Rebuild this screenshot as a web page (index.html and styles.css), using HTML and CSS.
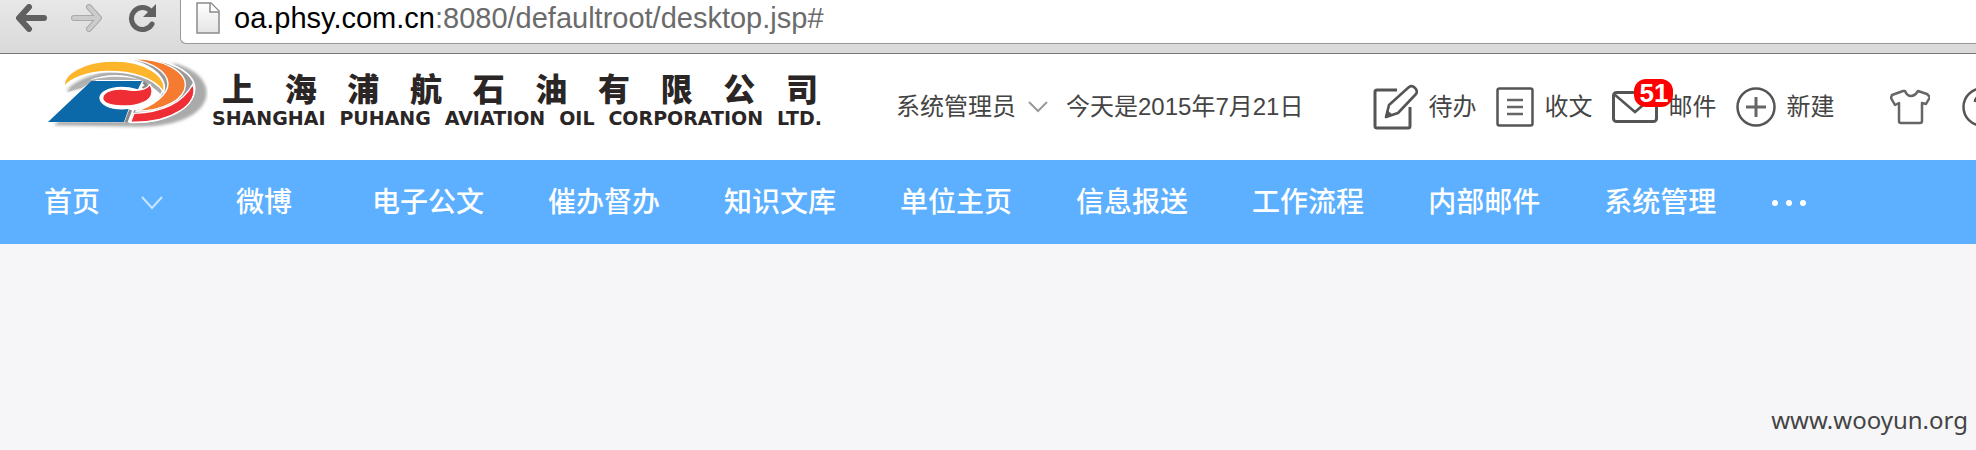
FILE: index.html
```html
<!DOCTYPE html>
<html lang="zh-CN">
<head>
<meta charset="utf-8">
<title>上海浦航石油有限公司</title>
<link rel="stylesheet" href="styles.css">
</head>
<body>
<div class="toolbar">
  <button class="tool" aria-label="后退"><svg width="32" height="28" viewBox="0 0 32 28"><path d="M14 3 4 14l10 11M5 14h24" fill="none" stroke="#606060" stroke-width="6" stroke-linecap="round" stroke-linejoin="round"/></svg></button>
  <button class="tool" aria-label="前进"><svg width="32" height="28" viewBox="0 0 32 28"><path d="M18 3l10 11-10 11M27 14H3" fill="none" stroke="#aaa" stroke-width="6" stroke-linecap="round" stroke-linejoin="round"/><path d="M18 3l10 11-10 11M27 14H3" fill="none" stroke="#ccc" stroke-width="4" stroke-linecap="round" stroke-linejoin="round"/></svg></button>
  <button class="tool" aria-label="刷新"><svg width="32" height="28" viewBox="0 0 32 28"><path d="M23 6.500A11 11 0 1 0 25 20" fill="none" stroke="#606060" stroke-width="5" stroke-linecap="round"/><path d="M29 0v13H16z" fill="#606060"/></svg></button>
  <div class="address">
    <svg width="24" height="32" viewBox="0 0 24 32"><defs><linearGradient id="sheet" x2="0" y2="1"><stop offset="0" stop-color="#fff"/><stop offset="1" stop-color="#e4e4e6"/></linearGradient></defs><path d="M1 1h14l8 8v22H1z" fill="url(#sheet)" stroke="#8a8a8a" stroke-width="1.500"/><path d="M14 1v9h9" fill="#fff" stroke="#8a8a8a" stroke-width="1.500"/></svg>
    <span class="url"><span class="host">oa.phsy.com.cn</span>:8080/defaultroot/desktop.jsp#</span>
  </div>
</div>
<header class="header">
  <div class="brand">
    <svg width="164" height="76" viewBox="42 12 492 228">
      <defs><filter id="soft"><feGaussianBlur stdDeviation="4"/></filter></defs>
      <g fill="#aaa" filter="url(#soft)">
        <path d="M72 226 190 108 108 124C150 70 300 30 410 90 460 40 420 35 390 34 500 44 540 100 528 145 510 205 420 230 330 230Z"/>
      </g>
      <path d="M54 217 184 88C240 66 330 64 400 140L340 217Z" fill="#fff"/>
      <path d="M112 126C150 88 250 66 330 90L200 90 160 110Z" fill="#b3b3b3"/>
      <path d="M290 27C420 18 494 70 494 115 494 175 400 222 300 217L310 178C350 178 395 150 402 110 400 70 350 40 290 27Z" fill="#999" stroke="#fff" stroke-width="5"/>
      <path d="M488 103C512 160 425 221 302 216L312 190C400 186 460 155 488 103Z" fill="#ee2d35" stroke="#fff" stroke-width="4"/>
      <path d="M300 26C400 24 466 64 466 105 466 145 405 184 316 184 365 170 416 135 414 100 411 65 370 38 300 26Z" fill="#f47b30" stroke="#fff" stroke-width="4"/>
      <path d="M102 112C98 70 160 34 252 33 340 32 414 76 401 126 370 80 300 64 230 65 170 67 120 86 102 112Z" fill="#fdb52b" stroke="#fff" stroke-width="5"/>
      <path d="M54 216 184 93H336L324 118C260 98 208 120 208 143 208 168 250 183 296 177L282 216Z" fill="#0b69aa"/>
      <path d="M340 96 350 106 338 116M302 180 288 217" fill="none" stroke="#888" stroke-width="9"/>
      <path d="M218 144C218 122 258 112 300 120 330 124 350 116 360 104 372 124 366 146 342 156 300 176 218 170 218 144Z" fill="#ee2d35" stroke="#fff" stroke-width="4"/>
    </svg>
    <div class="company">
      <div class="company-cn">上 海 浦 航 石 油 有 限 公 司</div>
      <div class="company-en">SHANGHAI PUHANG AVIATION OIL CORPORATION LTD.</div>
    </div>
  </div>
  <button class="user">系统管理员<svg width="20" height="12" viewBox="0 0 20 12"><path d="m1 1 9 9 9-9" fill="none" stroke="#999" stroke-width="2"/></svg></button>
  <span class="date">今天是2015年7月21日</span>
  <div class="actions">
    <a class="action" href="#"><svg width="45" height="46" viewBox="0 0 45 46"><g fill="none" stroke="#555" stroke-width="3" stroke-linejoin="round"><path d="M24 6H4Q2 6 2 8v34q0 2 2 2h31q2 0 2-2V23"/><path d="m13 33 3-12L36 3q3-2 6 1t1 6L25 29Z" stroke-width="2.600"/></g><path d="m12 34 2-8 6 5z" fill="#555"/></svg>待办</a>
    <a class="action" href="#"><svg width="38" height="40" viewBox="0 0 38 40"><rect x="1.500" y="1.500" width="35" height="37" rx="2" fill="none" stroke="#555" stroke-width="2.500"/><path d="M11 13h16M11 20h16M11 27h16" stroke="#666" stroke-width="2.500"/></svg>收文</a>
    <a class="action mail" href="#"><svg width="46" height="32" viewBox="0 0 46 32"><rect x="1.500" y="1.500" width="43" height="29" rx="3" fill="none" stroke="#555" stroke-width="3"/><path d="m2 3 21 18L44 3" fill="none" stroke="#555" stroke-width="2.500"/></svg>邮件<span class="badge">51</span></a>
    <a class="action" href="#"><svg width="40" height="40" viewBox="0 0 40 40"><circle cx="20" cy="20" r="18.500" fill="none" stroke="#555" stroke-width="2.500"/><path d="M10 20h20M20 10v20" stroke="#666" stroke-width="3"/></svg>新建</a>
    <button class="skin" aria-label="换肤"><svg width="40" height="36" viewBox="0 0 40 36"><path d="M13 2 2 6 1 9l4 7 4-2v18q0 2 2 2h19q2 0 2-2V14l4 1 4-7-3-3-9-3q-3 5-7 5t-6-5Z" fill="none" stroke="#666" stroke-width="2.500" stroke-linejoin="round"/></svg></button>
    <button class="help" aria-label="帮助"><svg width="40" height="40" viewBox="0 0 40 40"><circle cx="20" cy="20" r="18.500" fill="none" stroke="#555" stroke-width="2.500"/><path d="M13 15q1-6 7-6t7 6q0 4-7 7v4M20 29v3" fill="none" stroke="#555" stroke-width="3"/></svg></button>
  </div>
</header>
<nav class="nav">
  <a class="home" href="#">首页<svg width="22" height="14" viewBox="0 0 22 14"><path d="m1 1 10 11L21 1" fill="none" stroke="#c9e5ff" stroke-width="2"/></svg></a>
  <a class="short" href="#">微博</a>
  <a href="#">电子公文</a>
  <a href="#">催办督办</a>
  <a href="#">知识文库</a>
  <a href="#">单位主页</a>
  <a href="#">信息报送</a>
  <a href="#">工作流程</a>
  <a href="#">内部邮件</a>
  <a href="#">系统管理</a>
  <button class="more" aria-label="更多"><svg width="34" height="6" viewBox="0 0 34 6"><g fill="#fff"><circle cx="3" cy="3" r="3"/><circle cx="17" cy="3" r="3"/><circle cx="31" cy="3" r="3"/></g></svg></button>
</nav>
<main class="content">
  <span class="watermark">www.wooyun.org</span>
</main>
</body>
</html>
```
FILE: styles.css
```css
* { box-sizing: border-box; }
body {
  margin: 0;
  min-height: 100vh;
  display: flex;
  flex-direction: column;
  overflow-x: hidden;
  background: #f6f6f9;
  font-family: "Liberation Sans", "Noto Sans CJK SC", sans-serif;
}
svg { display: block; flex: none; }
button {
  padding: 0;
  border: 0;
  background: none;
  font: inherit;
  color: inherit;
}
a { color: inherit; text-decoration: none; }
.toolbar {
  display: flex;
  align-items: flex-start;
  gap: 24px;
  height: 54px;
  padding-left: 15px;
  border-bottom: 1px solid #777;
  background: linear-gradient(#e8e8e8, #d9d9d9);
}
.tool { padding-top: 4px; }
.address {
  flex: 1;
  display: flex;
  align-items: flex-start;
  gap: 14px;
  height: 44px;
  margin-left: -3px;
  padding: 2px 0 0 15px;
  border: solid #999;
  border-width: 0 0 1px 1px;
  border-radius: 0 0 0 6px;
  background: #fff;
}
.url {
  font-size: 29px;
  line-height: 32px;
  color: #6b6b6b;
  white-space: nowrap;
}
.host { color: #000; }
.header {
  display: flex;
  align-items: center;
  height: 106px;
  padding-left: 44px;
  overflow: hidden;
  background: #fff;
  color: #444;
  font-size: 24px;
  line-height: 32px;
  white-space: nowrap;
}
.header > * { flex: none; }
.brand {
  display: flex;
  align-items: center;
  gap: 4px;
  align-self: flex-start;
  width: 778px;
}
.company { flex: 1; padding-top: 20px; color: #2b2626; }
.company-cn {
  padding: 0 4px 0 10px;
  font-size: 32px;
  font-weight: 900;
  line-height: 32px;
  text-align-last: justify;
}
.company-en {
  font-family: "DejaVu Sans", sans-serif;
  font-weight: bold;
  font-size: 19px;
  line-height: 24px;
  text-align-last: justify;
}
.user {
  display: flex;
  align-items: center;
  gap: 12px;
  margin-left: 74px;
}
.date { margin-left: 18px; }
.actions {
  display: flex;
  align-items: center;
  gap: 20px;
  margin-left: 70px;
}
.action { display: flex; align-items: center; gap: 10px; flex: none; }
.mail { position: relative; }
.badge {
  position: absolute;
  left: 22px;
  top: -12px;
  padding: 0 5px;
  border-radius: 12px;
  background: #f00;
  color: #fff;
  font-size: 26px;
  font-weight: bold;
  line-height: 28px;
}
.skin { margin-left: 36px; }
.help { margin-left: 12px; }
.nav {
  display: flex;
  align-items: center;
  gap: 64px;
  height: 84px;
  padding: 2px 0 0 44px;
  background: #5cb0ff;
  color: #fff;
  font-size: 28px;
  font-weight: 500;
  line-height: 40px;
  white-space: nowrap;
}
.nav > * { flex: none; }
.home { display: flex; align-items: center; gap: 41px; margin-right: 9px; }
.short { margin-right: 16px; }
.more { margin-left: -8px; }
.content {
  flex: 1;
  display: flex;
  align-items: flex-end;
  justify-content: flex-end;
  padding: 0 8px 12px;
}
.watermark {
  color: #444;
  font-family: "Noto Sans", sans-serif;
  font-size: 24px;
  line-height: 36px;
}
```
